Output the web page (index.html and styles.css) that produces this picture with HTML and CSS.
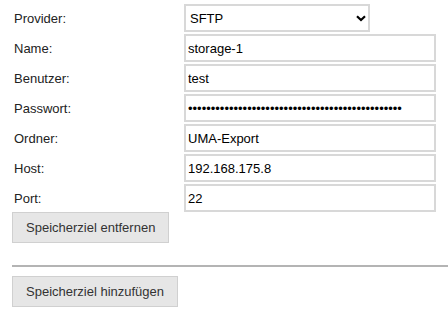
FILE: index.html
```html
<!DOCTYPE html>
<html lang="de">
  <head>
    <meta charset="utf-8" />
    <title>Speicherziele</title>
    <link rel="stylesheet" href="styles.css">
  </head>
  <body>
    <div class="target">
      <div class="form-grid">
        <label for="provider">Provider:</label>
        <div class="select-wrap">
          <select id="provider" class="field field-select">
            <option>SFTP</option>
            <option>FTP</option>
            <option>SMB</option>
          </select>
          <svg class="chevron" width="10" height="7" viewBox="0 0 10 7">
            <path d="M1 1.2 L5 5 L9 1.2" fill="none" stroke="#000" stroke-width="2.2"/>
          </svg>
        </div>

        <label for="name">Name:</label>
        <input type="text" id="name" class="field" value="storage-1">

        <label for="user">Benutzer:</label>
        <input type="text" id="user" class="field" value="test">

        <label for="pass">Passwort:</label>
        <input type="password" id="pass" class="field" value="geheimespasswortfuerdenexportaufdensftpserver12">

        <label for="folder">Ordner:</label>
        <input type="text" id="folder" class="field" value="UMA-Export">

        <label for="host">Host:</label>
        <input type="text" id="host" class="field" value="192.168.175.8">

        <label for="port">Port:</label>
        <input type="text" id="port" class="field" value="22">
      </div>
      <button type="button" class="btn">Speicherziel entfernen</button>
    </div>

    <hr class="divider">

    <button type="button" class="btn">Speicherziel hinzufügen</button>
  </body>
</html>
```

FILE: styles.css
```css
body {
  font-family: "Liberation Sans", Arial, sans-serif;
  font-size: 13px;
  color: #222;
  margin: 0;
  padding: 4px 0 0 12px;
}
.form-grid {
  display: grid;
  grid-template-columns: 172px 252px;
  row-gap: 2px;
  align-items: center;
}
.form-grid label {
  padding-left: 2px;
  color: #222;
}
.field {
  box-sizing: border-box;
  height: 28px;
  width: 252px;
  margin: 0;
  padding: 0 2px;
  border: 2px solid #d8d8d8;
  border-radius: 0;
  font-family: "Liberation Sans", Arial, sans-serif;
  font-size: 13px;
  color: #000;
  background: #fff;
  outline: none;
}
.select-wrap {
  position: relative;
  width: 186px;
}
.field-select {
  width: 186px;
  padding: 0 4px;
  appearance: none;
  -webkit-appearance: none;
}
.chevron {
  position: absolute;
  left: 172px;
  top: 11px;
}
.btn {
  display: block;
  box-sizing: border-box;
  height: 31px;
  padding: 0 13px;
  border: 1px solid #d0d0d0;
  border-radius: 0;
  background: #e6e6e6;
  color: #333;
  font-family: "Liberation Sans", Arial, sans-serif;
  font-size: 13px;
}
.divider {
  border: 0;
  border-top: 2px solid #b4b4b4;
  margin: 22px 0 9px 0;
}
```
